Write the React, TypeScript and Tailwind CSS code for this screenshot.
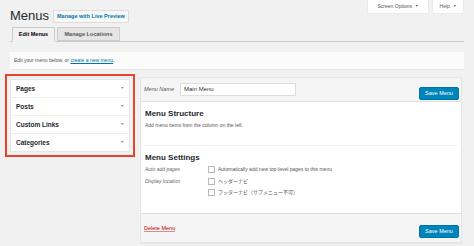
import React from "react";

const sans = "font-['Liberation_Sans','Noto_Sans_CJK_JP',sans-serif]";

const accordion = ["Pages", "Posts", "Custom Links", "Categories"];

const Checkbox: React.FC = () => (
  <span className="inline-block w-[7px] h-[7px] border border-[#b4b9be] bg-white shrink-0" />
);

const SaveButton: React.FC = () => (
  <button className="h-[13px] w-[40px] rounded-[2px] bg-[#0085ba] border border-[#0073aa] text-white text-[5.5px] leading-none">
    Save Menu
  </button>
);

export default function App() {
  return (
    <div className={`${sans} w-[474px] h-[246px] bg-[#f1f1f1] text-[#444] overflow-hidden relative`}>
      {/* header */}
      <div className="flex items-start">
        <div className="flex items-center gap-[4px] pl-[10px] pt-[9px]">
          <h1 className="text-[13px] leading-[14px] text-[#23282d]">Menus</h1>
          <span className="h-[13px] px-[3px] flex items-center bg-[#f7f7f7] border border-[#ddd] text-[5.5px] font-bold text-[#0073aa]">
            Manage with Live Preview
          </span>
        </div>
        <div className="ml-auto mr-[11px] flex gap-[5px]">
          <span className="h-[13px] w-[60px] flex items-center justify-center gap-[3px] bg-white shadow-[0_0_1px_rgba(0,0,0,0.15)] text-[5px] text-[#555]">
            Screen Options <span className="text-[3.5px]">▼</span>
          </span>
          <span className="h-[13px] w-[30px] flex items-center justify-center gap-[3px] bg-white shadow-[0_0_1px_rgba(0,0,0,0.15)] text-[5px] text-[#555]">
            Help <span className="text-[3.5px]">▼</span>
          </span>
        </div>
      </div>

      {/* tabs */}
      <div className="mx-[10px] mt-[4px] border-b border-[#ccc] flex gap-[2px] pl-[2px] h-[15px]">
        <span className="h-[15px] w-[43px] flex items-center justify-center border border-[#ccc] border-b-[#f1f1f1] bg-[#f1f1f1] text-[5.5px] font-bold text-[#000]">
          Edit Menus
        </span>
        <span className="h-[14px] w-[63px] flex items-center justify-center border border-[#ccc] bg-[#e5e5e5] text-[5.5px] font-bold text-[#555]">
          Manage Locations
        </span>
      </div>

      {/* notice */}
      <div className="mx-[10px] mt-[10px] h-[17px] bg-[#fbfbfb] shadow-[0_1px_1px_rgba(0,0,0,0.04)] flex items-center pl-[4px] text-[5px] text-[#555]">
        Edit your menu below, or&nbsp;<span className="text-[#0073aa] underline">create a new menu</span>.
      </div>

      {/* main */}
      <div className="flex items-start mt-[5px]">
        <div className="ml-[5px] w-[130px] h-[83px] border-2 border-[#e8432e] p-[3px]">
          <div className="bg-white border border-[#e5e5e5] h-full flex flex-col">
            {accordion.map((t) => (
              <div
                key={t}
                className="flex-1 flex items-center justify-between px-[5px] border-b border-[#eee] last:border-b-0"
              >
                <span className="text-[6.5px] font-bold text-[#23282d]">{t}</span>
                <span className="text-[3.5px] text-[#777]">▼</span>
              </div>
            ))}
          </div>
        </div>

        <div className="ml-[5px] mt-[3px] w-[322px] h-[166px] flex flex-col bg-white border border-[#e5e5e5] shadow-[0_1px_1px_rgba(0,0,0,0.04)]">
          <div className="h-[24px] bg-[#f5f5f5] border-b border-[#dfdfdf] flex items-center pl-[3px] pr-[2px]">
            <span className="text-[5.5px] italic text-[#555] w-[36px]">Menu Name</span>
            <span className="h-[13px] w-[116px] bg-white border border-[#ddd] flex items-center px-[3px] text-[6px] text-[#333]">
              Main Menu
            </span>
            <span className="ml-auto">
              <SaveButton />
            </span>
          </div>

          <div className="flex-1 px-[4px]">
            <div className="pt-[7px] pb-[15px] border-b border-[#eee]">
              <h3 className="text-[8px] font-bold text-[#23282d] leading-[10px]">Menu Structure</h3>
              <p className="mt-[3px] text-[5px] text-[#555]">Add menu items from the column on the left.</p>
            </div>
            <div className="pt-[7px]">
              <h3 className="text-[8px] font-bold text-[#23282d] leading-[10px]">Menu Settings</h3>
              <div className="mt-[3px] flex items-center">
                <span className="w-[63px] text-[5px] italic text-[#666]">Auto add pages</span>
                <span className="flex items-center gap-[3px] text-[5px] text-[#555]">
                  <Checkbox />
                  Automatically add new top-level pages to this menu
                </span>
              </div>
              <div className="mt-[5px] flex items-start">
                <span className="w-[63px] text-[5px] italic text-[#666]">Display location</span>
                <div className="flex flex-col gap-[3px]">
                  <span className="flex items-center gap-[3px] text-[5px] text-[#555]">
                    <Checkbox />
                    ヘッダーナビ
                  </span>
                  <span className="flex items-center gap-[3px] text-[5px] text-[#555]">
                    <Checkbox />
                    フッターナビ（サブメニュー不可）
                  </span>
                </div>
              </div>
            </div>
          </div>

          <div className="h-[29px] bg-[#f5f5f5] border-t border-[#dfdfdf] flex items-center pl-[3px] pr-[2px]">
            <span className="text-[5.5px] text-[#a00] underline decoration-[#d98a8a]">Delete Menu</span>
            <span className="ml-auto">
              <SaveButton />
            </span>
          </div>
        </div>
      </div>
    </div>
  );
}
